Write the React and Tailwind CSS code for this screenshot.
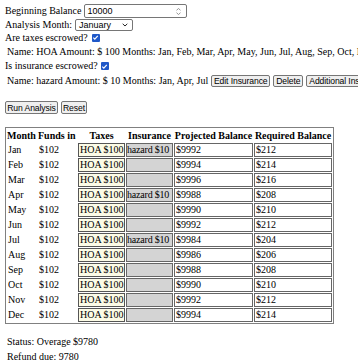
import React from "react";

const rows = [
  ["Jan", "hazard $10", "$9992", "$212"],
  ["Feb", "", "$9994", "$214"],
  ["Mar", "", "$9996", "$216"],
  ["Apr", "hazard $10", "$9988", "$208"],
  ["May", "", "$9990", "$210"],
  ["Jun", "", "$9992", "$212"],
  ["Jul", "hazard $10", "$9984", "$204"],
  ["Aug", "", "$9986", "$206"],
  ["Sep", "", "$9988", "$208"],
  ["Oct", "", "$9990", "$210"],
  ["Nov", "", "$9992", "$212"],
  ["Dec", "", "$9994", "$214"],
];

function Btn({ children, w, h = "h-[12px]" }) {
  return (
    <span
      className={`${w} ${h} shrink-0 inline-flex items-center justify-center border border-[#767676] rounded-[2px] bg-[#efefef] font-['Liberation_Sans',Arial,sans-serif] text-[8.6px] leading-[10px] tracking-[-0.1px] text-black whitespace-nowrap`}
    >
      {children}
    </span>
  );
}

function Check() {
  return (
    <span className="shrink-0 w-[8px] h-[8px] rounded-[1px] bg-[#1f58c8] flex items-center justify-center">
      <svg width="7" height="7" viewBox="0 0 8 8">
        <path d="M1.5 4.2 L3.2 5.8 L6.6 2.2" fill="none" stroke="white" strokeWidth="1.4" />
      </svg>
    </span>
  );
}

export default function App() {
  return (
    <div className="w-[358px] h-[362px] overflow-hidden bg-white text-black text-[10px] leading-[12px] font-['Liberation_Serif','Times_New_Roman',serif]">
      <div className="pl-[5px] pt-[4px]">
        <div className="flex items-center h-[14px] whitespace-nowrap">
          <span>Beginning Balance</span>
          <span className="ml-[3px] w-[103px] h-[14px] border border-[#767676] rounded-[2px] flex items-center justify-between pl-[2px] pr-[4px] font-['Liberation_Sans',Arial,sans-serif] text-[9px]">
            <span>10000</span>
            <svg width="7" height="9" viewBox="0 0 7 9">
              <path d="M1.5 3.3 L3.5 1.5 L5.5 3.3 M1.5 5.7 L3.5 7.5 L5.5 5.7" fill="none" stroke="#888" strokeWidth="0.9" />
            </svg>
          </span>
        </div>
        <div className="flex items-center h-[13px] whitespace-nowrap">
          <span>Analysis Month:</span>
          <span className="ml-[3px] w-[58px] h-[12px] border border-[#767676] rounded-[2px] flex items-center justify-between pl-[3px] pr-[4px] font-['Liberation_Sans',Arial,sans-serif] text-[9px]">
            <span>January</span>
            <svg width="6" height="4" viewBox="0 0 6 4">
              <path d="M0.7 0.8 L3 3 L5.3 0.8" fill="none" stroke="#222" strokeWidth="1" />
            </svg>
          </span>
        </div>
        <div className="flex items-center h-[13px] whitespace-nowrap">
          <span>Are taxes escrowed?</span>
          <span className="ml-[4px]"><Check /></span>
        </div>
        <div className="flex items-center h-[14px] mt-[1px] pl-[2px] whitespace-nowrap gap-[3px]">
          <span>Name: HOA Amount: $ 100 Months: Jan, Feb, Mar, Apr, May, Jun, Jul, Aug, Sep, Oct, Nov, Dec</span>
          <Btn w="w-[46px]">Edit Taxes</Btn>
          <Btn w="w-[30px]">Delete</Btn>
          <Btn w="w-[68px]">Additional Taxes</Btn>
        </div>
        <div className="flex items-center h-[14px] whitespace-nowrap">
          <span>Is insurance escrowed?</span>
          <span className="ml-[3px]"><Check /></span>
        </div>
        <div className="flex items-center h-[14px] mt-[1px] pl-[2px] whitespace-nowrap gap-[3px]">
          <span>Name: hazard Amount: $ 10 Months: Jan, Apr, Jul</span>
          <Btn w="w-[59px]">Edit Insurance</Btn>
          <Btn w="w-[30px]">Delete</Btn>
          <Btn w="w-[82px]">Additional Insurance</Btn>
        </div>
        <div className="flex items-center h-[15px] mt-[12px] gap-[3px]">
          <Btn w="w-[53px]" h="h-[13px]">Run Analysis</Btn>
          <Btn w="w-[26px]" h="h-[13px]">Reset</Btn>
        </div>
        <table className="mt-[12px] table-fixed w-[329px] border-separate border-spacing-[1px] border border-[#808080] text-[10px] leading-[12px]">
          <colgroup>
            <col className="w-[30px]" />
            <col className="w-[39px]" />
            <col className="w-[47px]" />
            <col className="w-[47px]" />
            <col className="w-[79px]" />
            <col className="w-[78px]" />
          </colgroup>
          <thead>
            <tr className="h-[13px]">
              <th className="p-0 text-left font-bold whitespace-nowrap">Month</th>
              <th className="p-0 text-left font-bold whitespace-nowrap">Funds in</th>
              <th className="p-0 text-center font-bold whitespace-nowrap">Taxes</th>
              <th className="p-0 text-center font-bold whitespace-nowrap">Insurance</th>
              <th className="p-0 text-center font-bold whitespace-nowrap">Projected Balance</th>
              <th className="p-0 text-center font-bold whitespace-nowrap">Required Balance</th>
            </tr>
          </thead>
          <tbody>
            {rows.map((r) => (
              <tr key={r[0]} className="h-[14px]">
                <td className="p-0 pl-[1px] whitespace-nowrap">{r[0]}</td>
                <td className="p-0 pl-[1px] whitespace-nowrap">$102</td>
                <td className="p-0 pl-[1px] whitespace-nowrap border border-[#555] bg-[#fcfbe6]">HOA $100</td>
                <td className="p-0 whitespace-nowrap border border-[#666] bg-[#d4d4d4] tracking-[-0.2px]">{r[1]}</td>
                <td className="p-0 pl-[1px] whitespace-nowrap border border-[#666]">{r[2]}</td>
                <td className="p-0 pl-[1px] whitespace-nowrap border border-[#666]">{r[3]}</td>
              </tr>
            ))}
          </tbody>
        </table>
        <div className="flex items-center h-[14px] mt-[11px] pl-[2px]">Status: Overage $9780</div>
        <div className="flex items-center h-[14px] mt-[1px] pl-[2px]">Refund due: 9780</div>
      </div>
    </div>
  );
}
